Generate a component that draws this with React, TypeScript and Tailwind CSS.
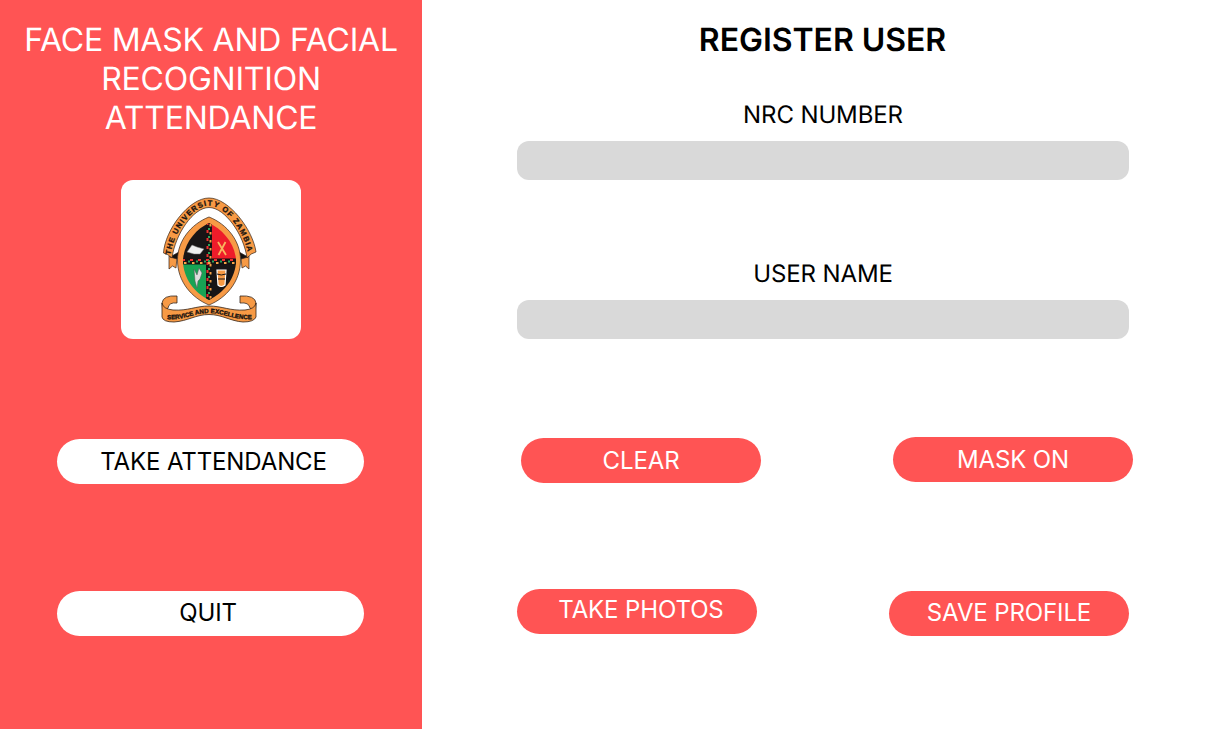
const Crest = () => (
  <svg viewBox="159 195 100 130" className="h-[130px] w-[100px]" aria-hidden="true">
    <defs>
      <clipPath id="field">
        <path d="M209 223C196 229 184 243 183 260C183 279 195 293 209 300C223 293 236 279 236 260C235 243 222 229 209 223Z" />
      </clipPath>
      <path id="arch" d="M170.500 256C173 232 193 205.500 209 205.500C225 205.500 245 232 248.500 256" />
      <path id="motto" d="M166 319C183 321 194 313 209 313C224 313 236 321 254 319" />
    </defs>
    <g stroke="#33241a" strokeWidth="0.7" strokeLinejoin="round">
      <path fill="#f79a45" d="M169 256V269L172.500 266L176 268L177 257ZM249 256V269L245.500 266L242 268L241 257Z" />
      <path fill="#111" d="M170 257L179 252L177 259ZM248 257L239 252L241 259Z" />
      <path fill="#f79a45" d="M163.500 253C165 230 189 198 209 198C229 198 253 230 256 252Q251 253 247 258C244 235 225 207.500 209 207.500C193 207.500 175 235 172 258Q168 254 163.500 253Z" />
      <path fill="#f79a45" d="M209 217C191 224 177.500 241 177.500 260C177.500 282 192 298 209 305C226 298 240.500 282 240.500 260C240.500 241 227 224 209 217Z" />
    </g>
    <g clipPath="url(#field)">
      <path fill="#181516" d="M180 220H209V261H180ZM209 261H240V305H209Z" />
      <path fill="#ee1c2a" d="M209 220H240V261H209Z" />
      <path fill="#17a354" d="M180 261H209V305H180Z" />
      <path stroke="#151313" strokeWidth="6" d="M209 220V302M180 261.500H238" />
      <path stroke="#ee3030" strokeWidth="2" strokeDasharray="3 5" d="M207.500 222V302M182 260H237" />
      <path stroke="#f7a347" strokeWidth="2" strokeDasharray="2.500 5.500" d="M210.500 224V302M184 263H237" />
      <path stroke="#2ba35c" strokeWidth="2" strokeDasharray="2 6" d="M209 220V302M188 261.500H237" />
    </g>
    <path fill="#eee" stroke="#777" strokeWidth="0.5" d="M187 252L192 245L197 247L204 249L200 254L194 254Z" />
    <path stroke="#f9b45d" strokeWidth="1.800" d="M218 242L226 255M225.500 242L218.500 255" />
    <path fill="#ddd" stroke="#555" strokeWidth="0.5" d="M194 269L197 275L199 268L202 273L200 279L198 281L197 288L195 281Z" />
    <path fill="#f79a45" stroke="#fff" strokeWidth="1.200" d="M217 270H226L225 285Q221 288 218 285Z" />
    <path fill="none" stroke="#181516" strokeWidth="1" d="M217 274Q221 276 226 274M218 279H225" />
    <g fill="#f79a45" stroke="#33241a" strokeWidth="0.8" strokeLinejoin="round">
      <path d="M162 303Q163 295 177 296V303Q169 302 168 308L163 315ZM256 303Q255 295 240 296V303Q249 302 250 308L255 315Z" />
      <path d="M162 303Q163 309 173 310C188 311 196 306 209 306C222 306 230 311 245 310Q255 309 256 303V317Q254 322 243 322C230 321 222 314.500 209 314.500C196 314.500 188 321 174 322Q163 322 162 317Z" />
    </g>
    <text fontFamily="Liberation Sans" fontSize="7.5" fontWeight="700" fill="#17120f" stroke="#17120f" strokeWidth="0.3" textLength="130">
      <textPath href="#arch" startOffset="1">THE UNIVERSITY OF ZAMBIA</textPath>
    </text>
    <text fontFamily="Liberation Sans" fontSize="6.2" fontWeight="700" fill="#17120f" stroke="#17120f" strokeWidth="0.35" textLength="86">
      <textPath href="#motto" startOffset="1">SERVICE AND EXCELLENCE</textPath>
    </text>
  </svg>
);

export default function App() {
  return (
    <main className="flex h-[729px] w-[1223px] overflow-hidden bg-white font-['Inter',sans-serif] text-[24px] leading-[30px] tracking-[-0.12px] text-black [text-rendering:geometricPrecision]">
      <aside className="flex w-[422px] shrink-0 flex-col items-center bg-[#ff5454] pt-5">
        <h1 className="w-[400px] text-center text-[32px] leading-[39px] tracking-[-0.22px] text-white">FACE MASK AND FACIAL RECOGNITION ATTENDANCE</h1>
        <div className="mt-[43px] flex h-[159px] w-[180px] justify-center rounded-xl bg-white pt-[15px] pr-1"><Crest /></div>
        <button className="mt-[100px] mr-px h-[45px] w-[307px] rounded-full bg-white pl-1.5">TAKE ATTENDANCE</button>
        <button className="mt-[107px] mr-px h-[45px] w-[307px] rounded-full bg-white pr-[5px] pb-0.5">QUIT</button>
      </aside>
      <section className="flex w-[802px] flex-col items-center pt-5">
        <h2 className="text-[32px] leading-[39px] font-semibold tracking-[-0.05px]">REGISTER USER</h2>
        <label className="mt-[41px] flex flex-col items-center gap-[11px]"><span className="pl-px">NRC NUMBER</span>
          <input className="h-[39px] w-[612px] rounded-xl bg-[#d9d9d9]" />
        </label>
        <label className="mt-[79px] flex flex-col items-center gap-[11px]"><span className="pl-px">USER NAME</span>
          <input className="h-[39px] w-[612px] rounded-xl bg-[#d9d9d9]" />
        </label>
        <div className="mt-[98px] flex w-[612px] justify-between pl-1 text-white">
          <button className="mt-px h-[45px] w-60 rounded-full bg-[#ff5454] pl-px">CLEAR</button>
          <button className="-mr-1 h-[45px] w-60 rounded-full bg-[#ff5454] pl-px">MASK ON</button>
        </div>
        <div className="mt-[106px] flex w-[612px] justify-between text-white">
          <button className="h-[45px] w-60 rounded-full bg-[#ff5454] pb-[3px] pl-[9px]">TAKE PHOTOS</button>
          <button className="mt-0.5 h-[45px] w-60 rounded-full bg-[#ff5454] pb-0.5 pl-px">SAVE PROFILE</button>
        </div>
      </section>
    </main>
  );
}
